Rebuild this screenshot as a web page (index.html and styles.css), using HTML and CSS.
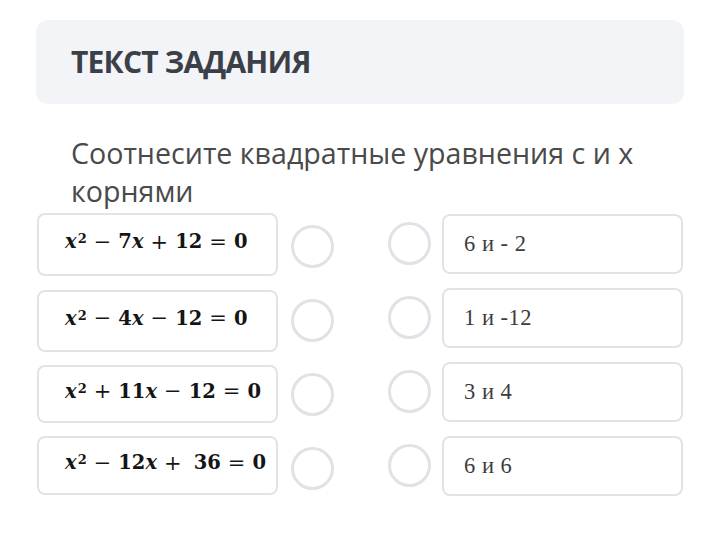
FILE: index.html
```html
<!DOCTYPE html>
<html lang="ru">
<head>
<meta charset="utf-8">
<link rel="stylesheet" href="styles.css">
</head>
<body>
<div class="page">
  <div class="header"><h1 class="title">ТЕКСТ ЗАДАНИЯ</h1></div>
  <p class="question">Соотнесите квадратные уравнения с и х корнями</p>
  <div class="match">
    <div class="col left">
      <div class="box eq r1"><span class="v">x</span><sup>2</sup><span class="op">−</span>7<span class="v">x</span><span class="op">+</span>12<span class="op">=</span>0</div>
      <div class="box eq r2"><span class="v">x</span><sup>2</sup><span class="op">−</span>4<span class="v">x</span><span class="op">−</span>12<span class="op">=</span>0</div>
      <div class="box eq r3"><span class="v">x</span><sup>2</sup><span class="op">+</span>11<span class="v">x</span><span class="op">−</span>12<span class="op">=</span>0</div>
      <div class="box eq r4"><span class="v">x</span><sup>2</sup><span class="op">−</span>12<span class="v">x</span><span class="op">+</span><span class="sp"></span>36<span class="op">=</span>0</div>
    </div>
    <div class="col dots dl">
      <span class="dot"></span><span class="dot"></span><span class="dot"></span><span class="dot"></span>
    </div>
    <div class="col dots dr">
      <span class="dot"></span><span class="dot"></span><span class="dot"></span><span class="dot"></span>
    </div>
    <div class="col right">
      <div class="box ans">6 и - 2</div>
      <div class="box ans">1 и -12</div>
      <div class="box ans">3 и 4</div>
      <div class="box ans">6 и 6</div>
    </div>
  </div>
</div>
</body>
</html>
```
FILE: styles.css
```css
html, body {
  margin: 0;
  padding: 0;
  background: #ffffff;
}
.page {
  padding: 20px 36px 0 36px;
  font-family: "Open Sans", "Liberation Sans", sans-serif;
}
.header {
  background: #f3f4f8;
  border-radius: 12px;
  height: 84px;
  display: flex;
  align-items: center;
  padding-left: 35px;
}
.title {
  margin: 0;
  font-size: 30px;
  font-weight: 700;
  color: #3b3f48;
  letter-spacing: -0.8px;
  padding-bottom: 1px;
}
.question {
  margin: 30px 0 0 35px;
  font-size: 28.6px;
  line-height: 38px;
  color: #4a4a4a;
  width: 610px;
}
.match {
  display: flex;
  margin-top: 3px;
}
.col {
  display: flex;
  flex-direction: column;
}
.box {
  box-sizing: border-box;
  width: 241px;
  border: 2px solid #e3e3e5;
  border-radius: 8px;
  display: flex;
  align-items: center;
}
.left {
  margin-left: 1px;
  gap: 13px;
}
.left .r1 { height: 63px; }
.left .r2 { height: 62px; margin-top: 1px; }
.left .r3 { height: 58px; }
.left .r4 { height: 59px; }
.eq {
  padding-left: 26px;
  font-family: "DejaVu Serif", serif;
  font-weight: 700;
  font-size: 19.5px;
  color: #151515;
  padding-bottom: 6px;
}
.eq .v { font-style: italic; }
.eq sup {
  font-size: 13px;
  position: relative;
  top: -3px;
  margin-left: 1px;
}
.eq .op {
  font-weight: 400;
  font-size: 21px;
  margin: 0 7px;
}
.eq .sp {
  display: inline-block;
  width: 5px;
}
.dot {
  box-sizing: border-box;
  width: 43px;
  height: 43px;
  border-radius: 50%;
  border: 3.5px solid #dfe2e6;
}
.dl {
  margin-left: 13px;
  gap: 31px;
  padding-top: 12px;
}
.dr {
  margin-left: 54px;
  gap: 31px;
  padding-top: 9px;
}
.right {
  margin-left: 11px;
  gap: 14px;
  padding-top: 1px;
}
.ans {
  height: 60px;
  padding-left: 20px;
  font-family: "Liberation Serif", serif;
  font-size: 22.5px;
  color: #3d3d3d;
  letter-spacing: 0.5px;
}
```
